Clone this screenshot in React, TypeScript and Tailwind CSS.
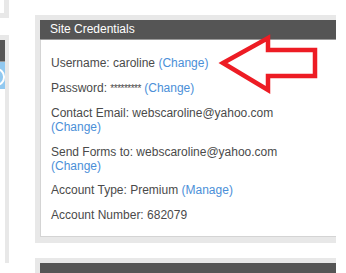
import React from "react";

const font = { fontFamily: '"Liberation Sans", Arial, sans-serif' };

function Row({ children }: { children: React.ReactNode }) {
  return <p className="mb-[10.5px] last:mb-0 leading-[14px]">{children}</p>;
}

function Link({ children }: { children: React.ReactNode }) {
  return (
    <span className="text-[#4b8fd8]">
      ({children})
    </span>
  );
}

export default function App() {
  return (
    <div
      className="relative w-[346px] h-[273px] overflow-hidden bg-white text-[12px] text-[#4a4a4a]"
      style={font}
    >
      <div className="flex gap-[26px]">
        {/* left column */}
        <div className="flex w-[9px] flex-col">
          <div className="h-[18px] bg-[#e8e8e8] pr-[5px] pb-[5px]">
            <div className="h-full bg-white" />
          </div>
          <div className="mt-[17px] flex h-[228px] flex-col bg-[#e8e8e8] pt-[5px] pr-[4px]">
            <div className="h-[22px] border-b border-[#999] bg-[#555]" />
            <div className="relative h-[27px] overflow-hidden bg-[#92c9f0]">
              <div className="absolute left-[-12px] top-[6px] h-[18px] w-[17px] rounded-full border-2 border-white" />
            </div>
            <div className="flex-1 bg-white" />
          </div>
        </div>

        {/* main column */}
        <div className="flex w-[301px] flex-col pt-[15px]">
          <div className="bg-[#e8e8e8] pl-[5px] pt-[5px] pb-[6px]">
            <div className="h-[20px] border-b border-[#9a9a9a] bg-[#555] pl-[10px] leading-[19px] text-white">
              Site Credentials
            </div>
            <div className="border-b border-l border-[#d4d4d4] bg-white pl-[10px] pt-[16px] pb-[14.5px]">
              <Row>
                Username: caroline <Link>Change</Link>
              </Row>
              <Row>
                Password: <span className="text-[10px] tracking-[-0.5px]">*********</span> <Link>Change</Link>
              </Row>
              <Row>
                Contact Email: webscaroline@yahoo.com
                <br />
                <Link>Change</Link>
              </Row>
              <Row>
                Send Forms to: webscaroline@yahoo.com
                <br />
                <Link>Change</Link>
              </Row>
              <Row>
                Account Type: Premium <Link>Manage</Link>
              </Row>
              <Row>Account Number: 682079</Row>
            </div>
          </div>
          <div className="mt-[15px] h-[40px] bg-[#e8e8e8] pl-[5px] pt-[5px]">
            <div className="h-full bg-[#555]" />
          </div>
        </div>
      </div>

      <svg
        className="pointer-events-none absolute left-0 top-0"
        width="346"
        height="273"
        viewBox="0 0 346 273"
      >
        <polygon
          points="223,63 268,38 268,50 315,50 315,76 268,76 268,90"
          fill="none"
          stroke="#ed1c24"
          strokeWidth="4.5"
          strokeLinejoin="miter"
        />
      </svg>
    </div>
  );
}
